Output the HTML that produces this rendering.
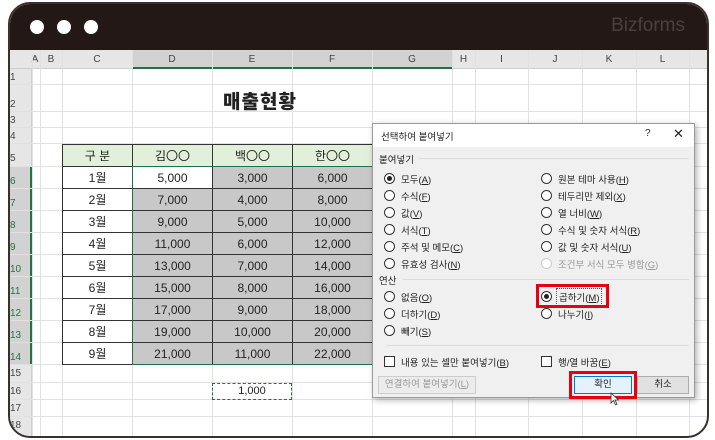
<!DOCTYPE html>
<html><head><meta charset="utf-8"><style>
*{margin:0;padding:0;box-sizing:border-box}
body{width:715px;height:440px;background:#fff;position:relative;overflow:hidden;font-family:"Liberation Sans","Noto Sans CJK KR",sans-serif;color:#222}
.a{position:absolute}
.frame{left:8px;top:2px;width:701px;height:436px;border:2px solid #3a302c;border-radius:22px;overflow:hidden;background:#fff}
.top{left:0;top:0;width:100%;height:46px;background:#231815}
.dot{width:14px;height:14px;border-radius:50%;background:#fff;top:16px}
.vl{width:1px;background:#e1e1e1}
.hl{height:1px;background:#e1e1e1}
.ch{font-size:10px;color:#444;text-align:center;top:48px;height:19px;line-height:19px}
.rh{font-size:10px;color:#444;left:2px;width:20px}
.dlg{left:372px;top:123px;width:323px;height:275px;background:#f0f0f0;border:1px solid #9a9a9a;box-shadow:2px 2px 6px rgba(0,0,0,.3)}
.t{font-size:9.5px;color:#222;white-space:nowrap}
.r{width:11px;height:11px;border:1px solid #333;border-radius:50%;background:#fff}
.r.on::after{content:"";position:absolute;left:2px;top:2px;width:5px;height:5px;border-radius:50%;background:#222}
.cb{width:11px;height:11px;border:1px solid #333;background:#fff}
.btn{height:18px;border:1px solid #adadad;background:#e1e1e1;font-size:9.5px;text-align:center;line-height:16px}
td{border:1px solid #333}
.g{background:#c8c8c8}
</style></head><body>
<div class="a frame">
<div class="a" style="left:-2px;top:-2px;width:705px;height:440px">
<div class="a" style="left:0;top:48px;width:100%;height:19px;background:#e6e6e6;border-bottom:1px solid #cfcfcf"></div>
<div class="a" style="left:124px;top:48px;width:320px;height:19px;background:#d2d2d2;border-bottom:2px solid #217346"></div>
<div class="a" style="left:0;top:67px;width:24px;height:375px;background:#e6e6e6;border-right:1px solid #cfcfcf"></div>
<div class="a" style="left:0;top:165px;width:24px;height:198px;background:#d2d2d2;border-right:2px solid #217346"></div>
<div class="a ch" style="left:22px;width:10px">A</div>
<div class="a ch" style="left:32px;width:22px">B</div>
<div class="a ch" style="left:54px;width:70px">C</div>
<div class="a ch" style="left:124px;width:80px">D</div>
<div class="a ch" style="left:204px;width:80px">E</div>
<div class="a ch" style="left:284px;width:80px">F</div>
<div class="a ch" style="left:364px;width:80px">G</div>
<div class="a ch" style="left:444px;width:23px">H</div>
<div class="a ch" style="left:467px;width:53px">I</div>
<div class="a ch" style="left:520px;width:54px">J</div>
<div class="a ch" style="left:574px;width:54px">K</div>
<div class="a ch" style="left:628px;width:53px">L</div>
<div class="a vl" style="left:24px;top:48px;height:392px"></div>
<div class="a vl" style="left:32px;top:48px;height:392px"></div>
<div class="a vl" style="left:54px;top:48px;height:392px"></div>
<div class="a vl" style="left:124px;top:48px;height:392px"></div>
<div class="a vl" style="left:204px;top:48px;height:392px"></div>
<div class="a vl" style="left:284px;top:48px;height:392px"></div>
<div class="a vl" style="left:364px;top:48px;height:392px"></div>
<div class="a vl" style="left:444px;top:48px;height:392px"></div>
<div class="a vl" style="left:467px;top:48px;height:392px"></div>
<div class="a vl" style="left:520px;top:48px;height:392px"></div>
<div class="a vl" style="left:574px;top:48px;height:392px"></div>
<div class="a vl" style="left:628px;top:48px;height:392px"></div>
<div class="a vl" style="left:681px;top:48px;height:392px"></div>
<div class="a hl" style="left:0;top:82px;width:100%"></div><div class="a rh" style="top:70px">1</div>
<div class="a hl" style="left:0;top:109px;width:100%"></div><div class="a rh" style="top:97px">2</div>
<div class="a hl" style="left:0;top:125px;width:100%"></div><div class="a rh" style="top:113px">3</div>
<div class="a hl" style="left:0;top:141px;width:100%"></div><div class="a rh" style="top:129px">4</div>
<div class="a hl" style="left:0;top:164px;width:100%"></div><div class="a rh" style="top:151px">5</div>
<div class="a rh" style="top:174px;color:#217346">6</div><div class="a rh" style="top:196px;color:#217346">7</div>
<div class="a rh" style="top:218px;color:#217346">8</div><div class="a rh" style="top:240px;color:#217346">9</div>
<div class="a rh" style="top:262px;color:#217346">10</div><div class="a rh" style="top:284px;color:#217346">11</div>
<div class="a rh" style="top:306px;color:#217346">12</div><div class="a rh" style="top:328px;color:#217346">13</div>
<div class="a rh" style="top:350px;color:#217346">14</div>
<div class="a hl" style="left:0;top:380px;width:100%"></div><div class="a rh" style="top:366px">15</div>
<div class="a hl" style="left:0;top:397px;width:100%"></div><div class="a rh" style="top:384px">16</div>
<div class="a hl" style="left:0;top:414px;width:100%"></div><div class="a rh" style="top:401px">17</div>
<div class="a rh" style="top:418px">18</div>
<div class="a hl" style="left:0;top:186px;width:100%"></div><div class="a hl" style="left:0;top:208px;width:100%"></div>
<div class="a hl" style="left:0;top:230px;width:100%"></div><div class="a hl" style="left:0;top:252px;width:100%"></div>
<div class="a hl" style="left:0;top:274px;width:100%"></div><div class="a hl" style="left:0;top:296px;width:100%"></div>
<div class="a hl" style="left:0;top:318px;width:100%"></div><div class="a hl" style="left:0;top:340px;width:100%"></div>
<div class="a hl" style="left:0;top:362px;width:100%"></div>
<div class="a" style="left:142px;top:85px;width:220px;text-align:center;font-size:19px;font-weight:900;letter-spacing:1px">매출현황</div>
<table class="a" style="left:54px;top:142px;border-collapse:collapse;font-size:12px;text-align:center">
<tr style="height:22px;background:#e2efda"><td style="width:70px">구 분</td><td style="width:80px">김〇〇</td><td style="width:80px">백〇〇</td><td style="width:80px">한〇〇</td></tr>
<tr style="height:22px"><td>1월</td><td>5,000</td><td class="g">3,000</td><td class="g">6,000</td></tr>
<tr style="height:22px"><td>2월</td><td class="g">7,000</td><td class="g">4,000</td><td class="g">8,000</td></tr>
<tr style="height:22px"><td>3월</td><td class="g">9,000</td><td class="g">5,000</td><td class="g">10,000</td></tr>
<tr style="height:22px"><td>4월</td><td class="g">11,000</td><td class="g">6,000</td><td class="g">12,000</td></tr>
<tr style="height:22px"><td>5월</td><td class="g">13,000</td><td class="g">7,000</td><td class="g">14,000</td></tr>
<tr style="height:22px"><td>6월</td><td class="g">15,000</td><td class="g">8,000</td><td class="g">16,000</td></tr>
<tr style="height:22px"><td>7월</td><td class="g">17,000</td><td class="g">9,000</td><td class="g">18,000</td></tr>
<tr style="height:22px"><td>8월</td><td class="g">19,000</td><td class="g">10,000</td><td class="g">20,000</td></tr>
<tr style="height:22px"><td>9월</td><td class="g">21,000</td><td class="g">11,000</td><td class="g">22,000</td></tr>
</table>
<div class="a" style="left:124px;top:164px;width:330px;height:199px;border:1px solid #217346"></div>
<div class="a" style="left:204px;top:381px;width:80px;height:17px;border:1.5px dashed #217346;font-size:11px;text-align:center;line-height:14px">1,000</div>
</div>
<div class="a top"></div>
<div class="a dot" style="left:20px"></div><div class="a dot" style="left:47px"></div><div class="a dot" style="left:74px"></div>
<div class="a" style="right:22px;top:11px;font-size:19px;color:#4a403c">Bizforms</div>
</div>
<div class="a dlg">
<div class="a" style="left:0;top:0;width:100%;height:23px;background:#fff"></div>
<div class="a t" style="left:8px;top:5px">선택하여 붙여넣기</div>
<div class="a t" style="left:272px;top:4px;font-size:10px">?</div>
<div class="a t" style="left:300px;top:2px;font-size:13px">✕</div>
<div class="a t" style="left:6px;top:28px">붙여넣기</div>
<div class="a" style="left:46px;top:34px;width:270px;height:1px;background:#ddd"></div>
<div class="a r on" style="left:11px;top:49px"></div><div class="a t" style="left:28px;top:48px">모두(<u>A</u>)</div>
<div class="a r" style="left:11px;top:66px"></div><div class="a t" style="left:28px;top:65px">수식(<u>F</u>)</div>
<div class="a r" style="left:11px;top:83px"></div><div class="a t" style="left:28px;top:82px">값(<u>V</u>)</div>
<div class="a r" style="left:11px;top:100px"></div><div class="a t" style="left:28px;top:99px">서식(<u>T</u>)</div>
<div class="a r" style="left:11px;top:117px"></div><div class="a t" style="left:28px;top:116px">주석 및 메모(<u>C</u>)</div>
<div class="a r" style="left:11px;top:134px"></div><div class="a t" style="left:28px;top:133px">유효성 검사(<u>N</u>)</div>
<div class="a r" style="left:168px;top:49px"></div><div class="a t" style="left:185px;top:48px">원본 테마 사용(<u>H</u>)</div>
<div class="a r" style="left:168px;top:66px"></div><div class="a t" style="left:185px;top:65px">테두리만 제외(<u>X</u>)</div>
<div class="a r" style="left:168px;top:83px"></div><div class="a t" style="left:185px;top:82px">열 너비(<u>W</u>)</div>
<div class="a r" style="left:168px;top:100px"></div><div class="a t" style="left:185px;top:99px">수식 및 숫자 서식(<u>R</u>)</div>
<div class="a r" style="left:168px;top:117px"></div><div class="a t" style="left:185px;top:116px">값 및 숫자 서식(<u>U</u>)</div>
<div class="a r" style="left:168px;top:134px;border-color:#ccc"></div><div class="a t" style="left:185px;top:133px;color:#999">조건부 서식 모두 병합(<u>G</u>)</div>
<div class="a t" style="left:6px;top:149px">연산</div>
<div class="a" style="left:30px;top:155px;width:286px;height:1px;background:#ddd"></div>
<div class="a r" style="left:11px;top:167px"></div><div class="a t" style="left:28px;top:166px">없음(<u>O</u>)</div>
<div class="a r" style="left:11px;top:184px"></div><div class="a t" style="left:28px;top:183px">더하기(<u>D</u>)</div>
<div class="a r" style="left:11px;top:201px"></div><div class="a t" style="left:28px;top:200px">빼기(<u>S</u>)</div>
<div class="a r on" style="left:168px;top:167px"></div><div class="a t" style="left:183px;top:164px;border:1px dotted #555;padding:1px 2px">곱하기(<u>M</u>)</div>
<div class="a" style="left:163px;top:160px;width:73px;height:24px;border:3px solid #e60012"></div>
<div class="a r" style="left:168px;top:184px"></div><div class="a t" style="left:185px;top:183px">나누기(<u>I</u>)</div>
<div class="a" style="left:14px;top:221px;width:302px;height:1px;background:#ddd"></div>
<div class="a cb" style="left:11px;top:232px"></div><div class="a t" style="left:28px;top:231px">내용 있는 셀만 붙여넣기(<u>B</u>)</div>
<div class="a cb" style="left:168px;top:232px"></div><div class="a t" style="left:185px;top:231px">행/열 바꿈(<u>E</u>)</div>
<div class="a btn" style="left:5px;top:252px;width:98px;color:#999;background:#ececec;border-color:#ccc">연결하여 붙여넣기(<u>L</u>)</div>
<div class="a btn" style="left:201px;top:252px;width:58px;background:#e5f1fb;border-color:#0078d7">확인</div>
<div class="a" style="left:196px;top:247px;width:68px;height:28px;border:3px solid #e60012"></div>
<div class="a btn" style="left:264px;top:252px;width:52px">취소</div>
<svg class="a" style="left:237px;top:268px" width="10" height="14" viewBox="0 0 10 14"><path d="M1 1 L1 11 L3.5 8.5 L5.5 13 L7 12.3 L5 8 L8.5 8 Z" fill="#fff" stroke="#333" stroke-width="0.8"/></svg>
</div>
</body></html>
